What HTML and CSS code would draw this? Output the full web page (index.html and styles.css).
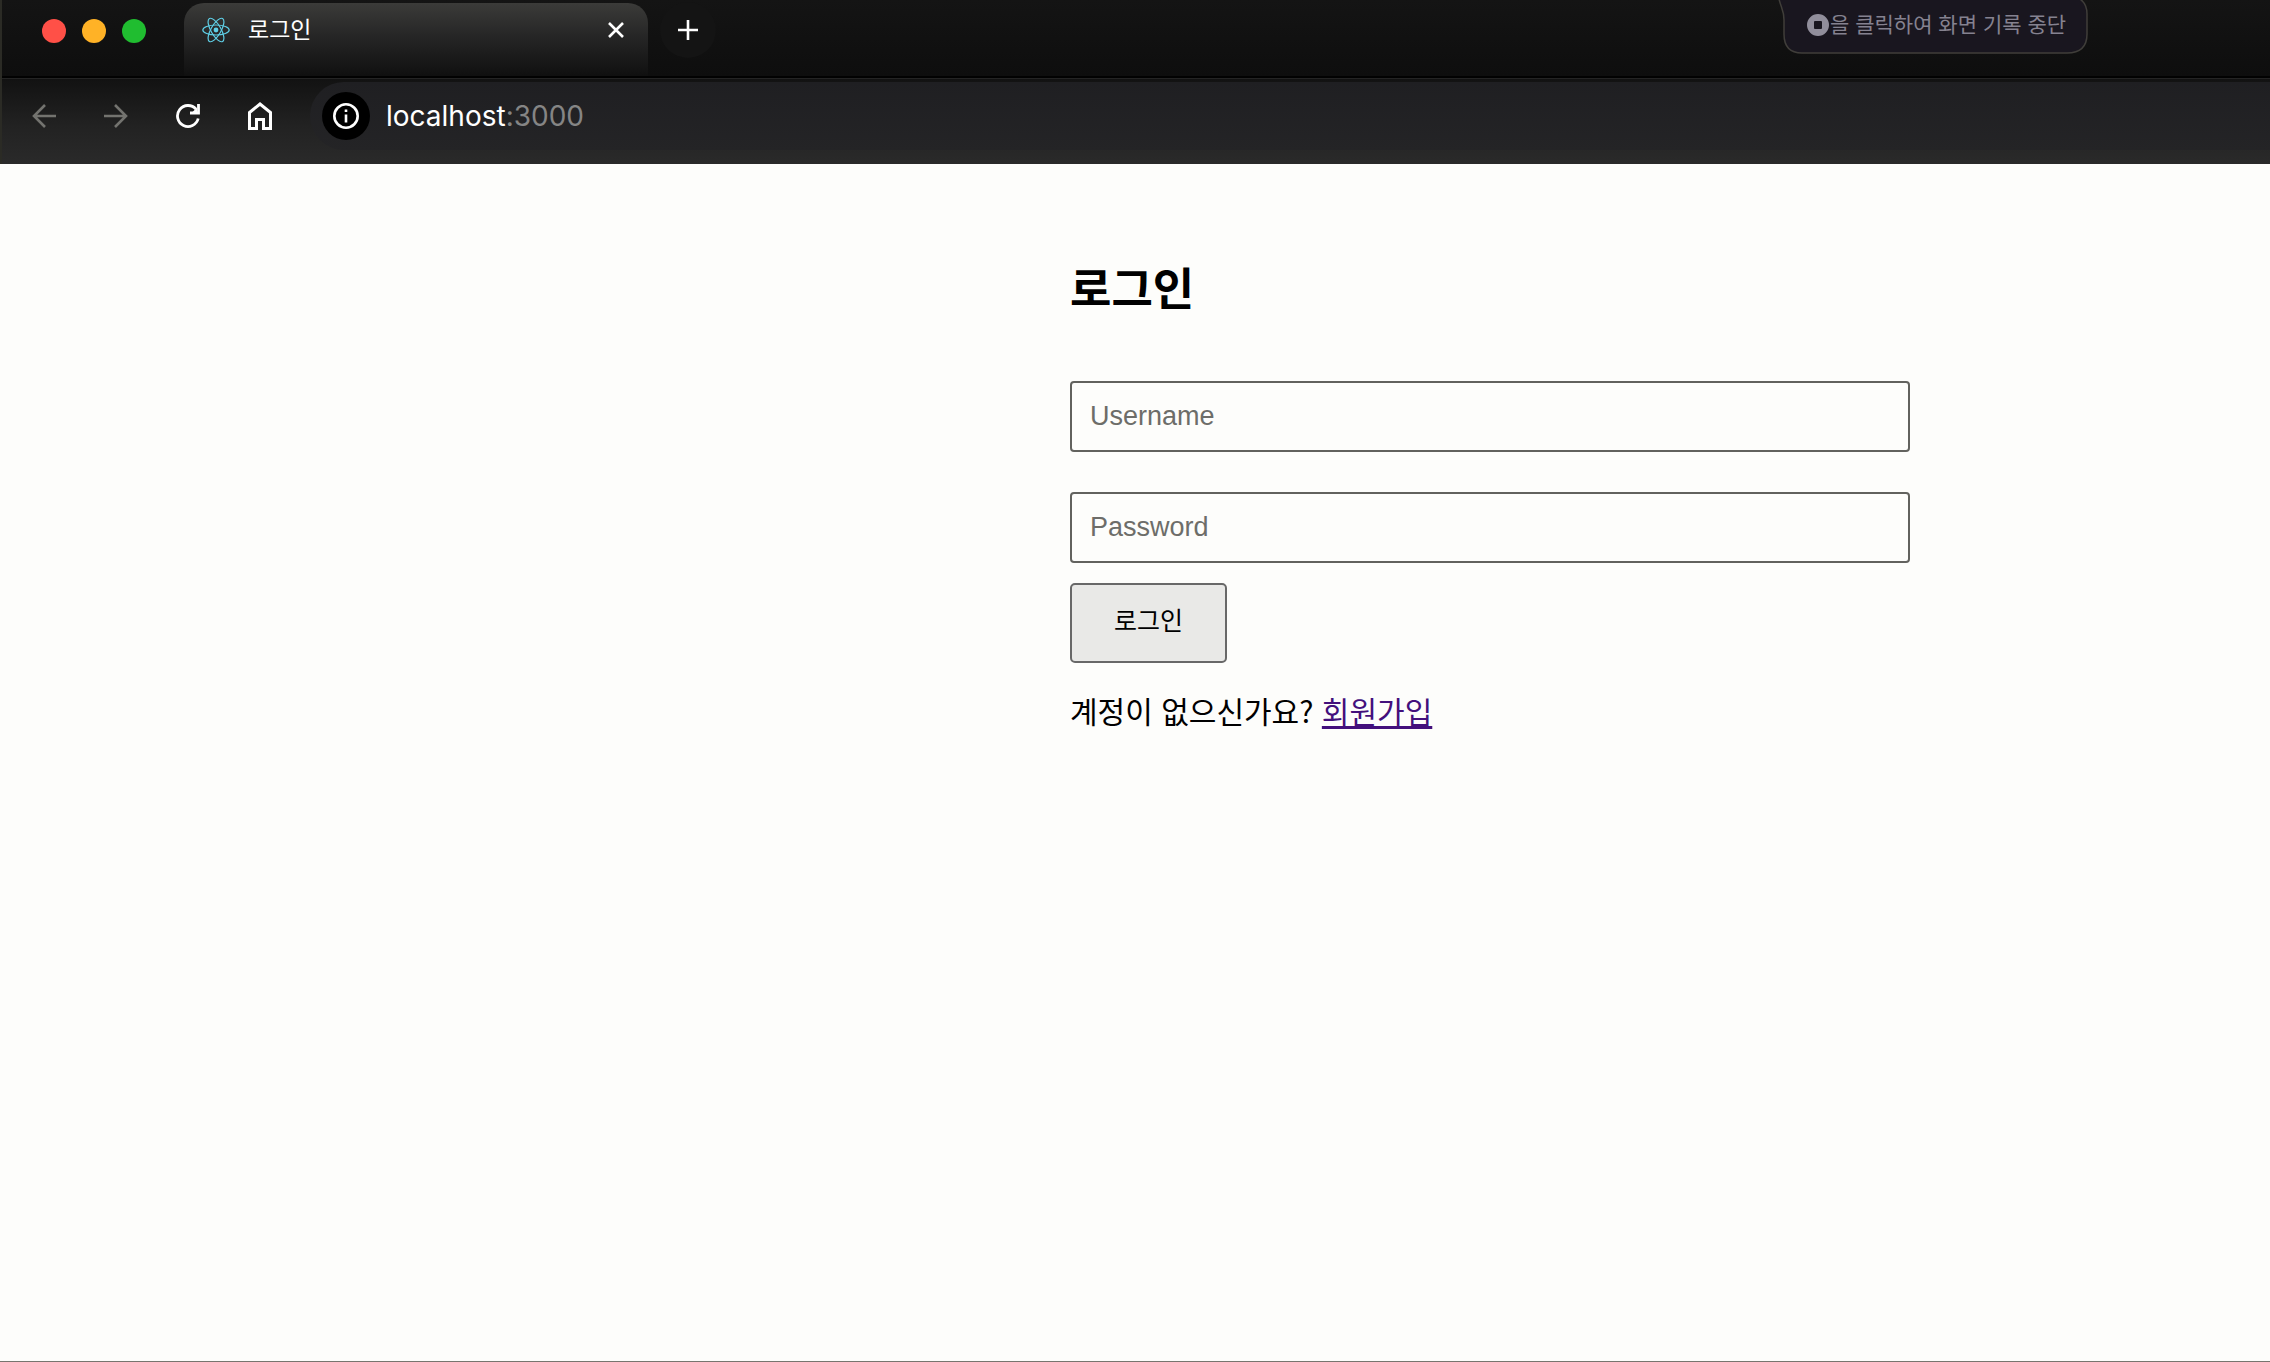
FILE: index.html
```html
<!DOCTYPE html>
<html lang="ko">
<head>
<meta charset="utf-8">
<title>로그인</title>
<link rel="stylesheet" href="styles.css">
</head>
<body>
<header class="browser">
  <div class="tab-strip">
    <div class="lights">
      <span class="light red"></span>
      <span class="light amber"></span>
      <span class="light green"></span>
    </div>
    <div class="tab">
      <svg class="favicon" width="28" height="26" viewBox="0 0 28 26" fill="none" stroke="#5fcfe6" stroke-width="1.2">
        <ellipse cx="14" cy="13" rx="13.2" ry="5"/>
        <ellipse cx="14" cy="13" rx="13.2" ry="5" transform="rotate(60 14 13)"/>
        <ellipse cx="14" cy="13" rx="13.2" ry="5" transform="rotate(120 14 13)"/>
        <circle cx="14" cy="13" r="2.4" fill="#5fcfe6" stroke="none"/>
      </svg>
      <span class="tab-title">로그인</span>
      <button class="icon-button" type="button" aria-label="탭 닫기">
        <svg width="16" height="16" viewBox="0 0 16 16" stroke="#fff" stroke-width="2.6"><path d="M1 1l14 14M15 1L1 15"/></svg>
      </button>
    </div>
    <button class="icon-button new-tab" type="button" aria-label="새 탭">
      <svg width="20" height="20" viewBox="0 0 20 20" stroke="#fff" stroke-width="2.6"><path d="M10 0v20M0 10h20"/></svg>
    </button>
  </div>
  <nav class="toolbar">
    <button class="icon-button dim" type="button" aria-label="뒤로">
      <svg width="24" height="24" viewBox="0 0 24 24" fill="none" stroke="currentColor" stroke-width="2.6"><path d="M24 12H2M13 1L2 12l11 11"/></svg>
    </button>
    <button class="icon-button dim" type="button" aria-label="앞으로">
      <svg width="24" height="24" viewBox="0 0 24 24" fill="none" stroke="currentColor" stroke-width="2.6"><path d="M0 12h22M11 1l11 11-11 11"/></svg>
    </button>
    <button class="icon-button" type="button" aria-label="새로고침">
      <svg width="24" height="24" viewBox="0 0 24 24" fill="none" stroke="currentColor" stroke-width="2.8"><path d="M22.2 14.5A10.5 10.5 0 1 1 20 5.200"/><path d="M22.500 0v9H14"/><path d="M16 8.500l5-5v5z" fill="currentColor" stroke="none"/></svg>
    </button>
    <button class="icon-button" type="button" aria-label="홈">
      <svg width="24" height="28" viewBox="0 0 24 28" fill="none" stroke="currentColor" stroke-width="3"><path d="M1.500 26.500V10.500L12 2l10.500 8.500v16H15.500V17.500h-7v9z"/></svg>
    </button>
    <div class="address">
      <button class="icon-button site-info" type="button" aria-label="사이트 정보">
        <svg width="26" height="26" viewBox="0 0 26 26" fill="none" stroke="currentColor" stroke-width="2.600"><circle cx="13" cy="13" r="11.700"/><path d="M13 11.500v8M13 6.500v2.500"/></svg>
      </button>
      <span class="url">localhost<span class="port">:3000</span></span>
    </div>
  </nav>
  <div class="recording">
    <svg class="recording-shape" width="310" height="54" viewBox="0 0 310 54" fill="#19161f" stroke="#403e3a" stroke-width="1.500"><path d="M1 -1C3 8 6 10 6 20V34Q6 53 24 53H289Q309 53 309 34V14Q309 4 302 -1"/></svg>
    <svg width="22" height="22" viewBox="0 0 22 22"><path d="M11 0a11 11 0 1 0 0 22a11 11 0 0 0 0-22zM8 7h6a1 1 0 0 1 1 1v6a1 1 0 0 1-1 1H8a1 1 0 0 1-1-1V8a1 1 0 0 1 1-1z" fill="#918e9b" fill-rule="evenodd"/></svg>
    <span>을 클릭하여 화면 기록 중단</span>
  </div>
</header>
<main class="page">
  <form class="login">
    <h2 class="heading">로그인</h2>
    <input class="field" type="text" placeholder="Username" aria-label="Username">
    <input class="field" type="password" placeholder="Password" aria-label="Password">
    <button class="submit" type="button">로그인</button>
    <p class="signup">계정이 없으신가요? <a href="#signup">회원가입</a></p>
  </form>
</main>
</body>
</html>
```
FILE: styles.css
```css
* {
  box-sizing: border-box;
}

body {
  margin: 0;
  min-height: 100vh;
  display: flex;
  flex-direction: column;
  background: #fdfdfb;
  color: #000;
  font-family: "Noto Sans CJK KR", sans-serif;
}

.browser {
  position: relative;
  color: #fff;
  border-left: 2px solid #2b2b25;
  background: #121212;
}

.tab-strip {
  display: flex;
  height: 78px;
  border-bottom: 2px solid #020202;
  background: linear-gradient(#141414, #0e0e0e);
}

.lights {
  display: flex;
  gap: 16px;
  padding: 19px 38px 0 40px;
}

.light {
  width: 24px;
  height: 24px;
  border-radius: 50%;
}

.red { background: #ff5047; }
.amber { background: #ffb226; }
.green { background: #20bd30; }

.tab {
  display: flex;
  align-items: center;
  width: 464px;
  height: 73px;
  margin-top: 3px;
  padding: 0 24px 20px 18px;
  border-radius: 20px 20px 0 0;
  background: linear-gradient(#3b3b39, #262626 45%, #101010);
}

.tab-title {
  flex: 1;
  padding: 0 0 4px 18px;
  font-size: 23px;
  line-height: 32px;
}

.icon-button {
  display: flex;
  align-items: center;
  justify-content: center;
  padding: 0;
  border: 0;
  background: none;
  color: #fff;
}

.new-tab {
  width: 56px;
  height: 56px;
  margin: 2px 0 0 12px;
  border-radius: 50%;
  background: #141414;
}

.toolbar {
  display: flex;
  align-items: center;
  gap: 48px;
  height: 86px;
  padding: 0 0 12px 30px;
  border-top: 1px solid #242424;
  background: linear-gradient(#121212, #222222 55%, #2a2a2a);
}

.dim {
  color: #73736f;
}

.address {
  flex: 1;
  display: flex;
  align-items: center;
  gap: 16px;
  height: 68px;
  padding-left: 12px;
  margin-left: -10px;
  border-radius: 34px 0 0 34px;
  background: linear-gradient(#1f1f22, #242426);
}

.site-info {
  width: 48px;
  height: 48px;
  border-radius: 50%;
  background: #000;
}

.url {
  font-family: Inter, sans-serif;
  font-size: 28px;
  line-height: 36px;
}

.port {
  color: #858585;
}

.recording {
  position: absolute;
  top: 0;
  right: 182px;
  z-index: 1;
  display: flex;
  gap: 1px;
  width: 310px;
  height: 54px;
  padding: 14px 0 0 29px;
  color: #858290;
  font-size: 21px;
  line-height: 18px;
  white-space: nowrap;
}

.recording-shape {
  position: absolute;
  top: 0;
  left: 0;
  z-index: -1;
}

.page {
  flex: 1;
  display: grid;
  grid-template-columns: 107fr 84fr 36fr;
  align-items: start;
  border-bottom: 1px solid #77756f;
}

.login {
  grid-column: 2;
  display: flex;
  flex-direction: column;
  align-items: flex-start;
  padding-top: 91px;
}

.heading {
  margin: 0 0 62px;
  font-size: 45px;
  line-height: 64px;
}

.field {
  width: 100%;
  height: 71px;
  margin: 0 0 40px;
  padding: 0 18px;
  border: 2px solid #62625e;
  border-radius: 4px;
  background: transparent;
  font-family: "Liberation Sans", sans-serif;
  font-size: 27px;
}

.field::placeholder {
  color: #6d6d69;
}

.submit {
  width: 157px;
  height: 80px;
  margin-top: -20px;
  padding: 0 0 8px;
  border: 2px solid #686868;
  border-radius: 5px;
  background: #e9e9e7;
  color: #000;
  font-family: "Noto Sans CJK KR", sans-serif;
  font-size: 25px;
}

.signup {
  margin: 25px 0 0;
  font-size: 30px;
  line-height: 44px;
}

.signup a {
  color: #43107c;
  text-underline-offset: 3px;
}
```
